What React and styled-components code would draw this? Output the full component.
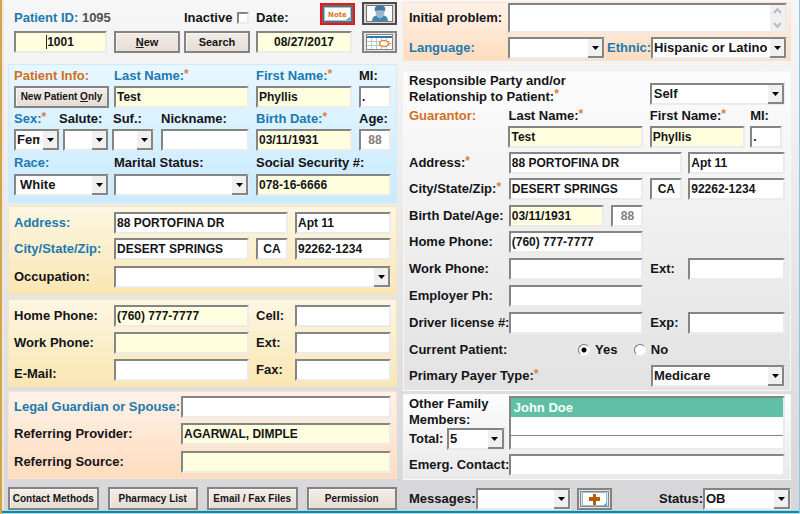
import React from "react";
import styled, { createGlobalStyle, css } from "styled-components";

const GlobalStyle = createGlobalStyle`
  *, *::before, *::after { box-sizing: border-box; }
  body {
    margin: 0;
    background: #dadadc;
    font: bold 13px/14px "Liberation Sans", Arial, sans-serif;
    color: #141418;
  }
  button, input, select, textarea { font: inherit; color: inherit; margin: 0; }
`;

const sunken = css`
  border: 2px solid;
  border-color: #858585 #ebebeb #ebebeb #858585;
`;

const Window = styled.main`
  border-left: 2px solid #cfa54e;
  border-right: 1px solid #8cc8e2;
  background: linear-gradient(#f6f6f6, #eeeeef 30%, #d6d6d8);
`;

const Columns = styled.div`
  display: grid;
  grid-template-columns: minmax(0, 389fr) minmax(0, 388fr);
  column-gap: 6px;
  padding: 2px 8px 0 4px;
  border-left: 2px solid #eee8dc;
`;

const Column = styled.div`
  display: flex;
  flex-direction: column;
`;

const BottomEdge = styled.div`
  height: 4px;
  border-top: 1px solid #a5dbea;
  border-bottom: 1px solid #b5e0ea;
  background: #0f8a9c;
`;

const fills = {
  sky: ["#e8f7ff", "#c8eaff", "#ceecfd"],
  sand: ["#fdf6e2", "#f9e6b2", "#f8e6b8"],
  peach: ["#fff2e8", "#ffdcbe", "#fde3cf"],
  gray: ["#fcfcfc", "#e2e2e3", "#f8f8f8"],
  white: ["#fdfdfd", "#e9e9ea", "#f8f8f8"],
};

const Panel = styled.section`
  margin-top: ${(p) => p.$gap || 0}px;
  padding: ${(p) => p.$pad};
  border: 1px solid ${(p) => fills[p.$fill][2]};
  background: linear-gradient(${(p) => fills[p.$fill][0]}, ${(p) => fills[p.$fill][1]});
`;

const Row = styled.div`
  display: grid;
  grid-template-columns: ${(p) => p.$cols.map((c) => `minmax(0, ${c}fr)`).join(" ")};
  align-items: center;
  min-height: ${(p) => p.$h || 22}px;
  margin-top: ${(p) => p.$top || 0}px;
  padding: ${(p) => p.$pad || 0};
`;

const Cell = styled.div`
  position: relative;
  display: flex;
  align-items: ${(p) => p.$items || "center"};
  justify-content: ${(p) => p.$justify || "flex-start"};
  align-self: ${(p) => p.$align || "center"};
  min-width: 0;
  padding-right: ${(p) => p.$gap || 0}px;
`;

const tones = { blue: "#2079b0", orange: "#d0701c", black: "#141418" };

const Label = styled.label`
  color: ${(p) => tones[p.$tone || "black"]};
  line-height: ${(p) => (p.$twoLine ? 16 : 14)}px;
  white-space: nowrap;
`;

const Heading = styled.h2`
  margin: 0;
  font: inherit;
  color: #d0701c;
`;

const Caption = styled.span`
  line-height: 16px;
  white-space: nowrap;
`;

const PatientId = styled.span`
  color: #55504e;
`;

const Star = styled.span`
  display: inline-block;
  height: 10px;
  font-size: 12px;
  line-height: 10px;
  vertical-align: top;
  color: #d9823f;
`;

const Field = styled.input`
  display: block;
  width: 100%;
  height: 22px;
  padding: 0 1px 1px;
  ${sunken}
  border-radius: 0;
  outline: none;
  background: ${(p) => (p.$required ? "#ffffdf" : "#fff")};
  color: ${(p) => (p.$dim ? "#808080" : "#141418")};
  font-size: 12px;
  text-align: ${(p) => (p.$center ? "center" : "left")};
`;

const Caret = styled.span`
  position: absolute;
  left: calc(50% - 18px);
  top: 4px;
  width: 1px;
  height: 14px;
  background: #222;
`;

const PickBox = styled.div`
  position: relative;
  width: 100%;
  min-width: 0;
`;

const PickControl = styled.select`
  display: block;
  width: 100%;
  height: 22px;
  padding: 0 18px 0 ${(p) => p.$indent}px;
  ${sunken}
  border-radius: 0;
  outline: none;
  appearance: none;
  background: #fff;
`;

const PickArrow = styled.span`
  position: absolute;
  top: 2px;
  right: 1px;
  width: 16px;
  height: 19px;
  display: grid;
  place-items: center;
  border: solid;
  border-width: 0 2px 2px 0;
  border-color: #858585;
  background: #f0f0f0;
  pointer-events: none;
`;

function Pick({ id, label, value = "", indent = 3 }) {
  return (
    <PickBox>
      <PickControl id={id} aria-label={label} defaultValue={value} $indent={indent}>
        <option value={value}>{value}</option>
      </PickControl>
      <PickArrow>
        <svg width="7" height="4" viewBox="0 0 7 4" aria-hidden="true">
          <path d="M0 0h7L3.500 4z" fill="#000" />
        </svg>
      </PickArrow>
    </PickBox>
  );
}

const Button = styled.button`
  width: 100%;
  height: ${(p) => p.$h || 22}px;
  padding: 0;
  border: 2px solid #858286;
  border-radius: 0;
  background: linear-gradient(#f2ede7, #e6ddd3);
  box-shadow: inset 1px 1px #faf8f5;
  font-size: ${(p) => p.$size || 10}px;
  line-height: 12px;
  white-space: nowrap;
`;

const IconButton = styled.button`
  display: block;
  flex: none;
  width: 35px;
  height: ${(p) => p.$h || 22}px;
  padding: 0;
  border: 2px solid ${(p) => p.$edge || "#858286"};
  background: #ece4dc;
  line-height: 0;
  svg { display: block; width: 100%; height: 100%; }
`;

const CheckBox = styled.input`
  appearance: none;
  width: 12px;
  height: 12px;
  ${sunken}
  background: #fff;
`;

const Radio = styled.input`
  appearance: none;
  width: 12px;
  height: 12px;
  border: 1px solid;
  border-color: #777 #f4f4f4 #f4f4f4 #777;
  border-radius: 50%;
  background: #fff;
  &:checked { background: radial-gradient(circle, #000 0 2px, #fff 3px); }
`;

const Choice = styled.label`
  display: flex;
  align-items: center;
  gap: 5px;
`;

const ProblemBox = styled.div`
  position: relative;
  width: 100%;
`;

const Problem = styled.textarea`
  display: block;
  width: 100%;
  height: 30px;
  ${sunken}
  outline: none;
  resize: none;
  background: #fff;
`;

const Scroller = styled.span`
  position: absolute;
  top: 2px;
  right: 2px;
  bottom: 2px;
  width: 15px;
  background: #f0f0f0;
  svg { display: block; width: 15px; height: 26px; }
`;

const FamilyLayout = styled.div`
  display: grid;
  grid-template-columns: minmax(0, 100fr) minmax(0, 277fr);
`;

const FamilyList = styled.ul`
  margin: 0;
  padding: 0;
  height: 54px;
  list-style: none;
  ${sunken}
  background: #fff;
`;

const FamilyItem = styled.li`
  height: 19px;
  padding: 3px 3px 0;
  background: ${(p) => (p.$selected ? "#60bfa4" : "#fff")};
  color: #f4fffb;
  & + & { border-bottom: 1px solid #858585; }
`;

const Footer = styled.div`
  display: grid;
  grid-template-columns: repeat(4, minmax(0, 1fr));
  gap: 9px;
  margin-top: 8px;
`;

const NoteIcon = () => (
  <svg viewBox="0 0 31 18" aria-hidden="true">
    <rect width="31" height="18" fill="#626b72" />
    <rect x="2.500" y="2.500" width="26" height="13" fill="#fff" stroke="#9bc7de" />
    <path d="M28 12v3h-4z" fill="#4d9dca" />
    <text x="15.500" y="12" textAnchor="middle" fontFamily="DejaVu Sans" fontWeight="bold" fontSize="7" fill="#dc7228">Note</text>
  </svg>
);

const PersonIcon = () => (
  <svg viewBox="0 0 31 19" aria-hidden="true">
    <rect width="31" height="19" fill="#ded8d0" />
    <rect x="2.500" y="1.500" width="26" height="16" fill="#fafcfd" stroke="#777" />
    <path d="M8 17c0-4 3-6 8-6s8 2 8 6z" fill="#4386b4" />
    <ellipse cx="16" cy="8" rx="4.500" ry="5" fill="#9cb7cb" />
    <path d="M11 7C10 3 12 1.500 16 1.500S22 3 21 7c-3-1-7-1-10 0z" fill="#3977a5" />
    <path d="M13 12l3 2 3-2" fill="none" stroke="#b9d3e4" />
  </svg>
);

const CalendarIcon = () => (
  <svg viewBox="0 0 31 18" aria-hidden="true">
    <rect x="2.500" y="1.500" width="26" height="15" fill="#fff" stroke="#858585" />
    <path d="M3 4h25" stroke="#2c78ad" strokeWidth="2" />
    <path d="M3 8.500h23M3 12.500h23M7.500 5v11M12.500 5v11M17.500 5v11M22.500 5v11" stroke="#b4c9d8" />
    <ellipse cx="20" cy="10.500" rx="4.500" ry="3" fill="#fff" stroke="#e18a42" strokeWidth="1.500" />
    <path d="M24 10.500h3" stroke="#e18a42" />
  </svg>
);

const AddIcon = () => (
  <svg viewBox="0 0 31 18" aria-hidden="true">
    <rect x="1.500" y="1.500" width="28" height="15" fill="#e8e2dc" stroke="#8a8683" />
    <rect x="3.500" y="2.500" width="24" height="13" fill="#fff" stroke="#8cc4e4" />
    <path d="M28 12v4h-4z" fill="#5aaad6" />
    <path d="M14 4h3v3h4v4h-4v4h-3v-4h-4V7h4z" fill="#b75b08" />
  </svg>
);

const req = <Star>*</Star>;
const IDENTITY = [100, 142, 103, 32];
const ADDRESS = [100, 142, 39, 96];
const PHONE = [100, 142, 39, 96];
const RIGHT = [100, 142, 38, 97];

function Header() {
  return (
    <div>
      <Row $cols={[170, 72, 106, 35]} $h={23} $pad="0 0 0 6px">
        <Cell $align="end">
          <Label htmlFor="pid" $tone="blue">Patient ID: <PatientId>1095</PatientId></Label>
        </Cell>
        <Cell $align="end" $gap={7} $justify="space-between">
          <Label htmlFor="inactive">Inactive</Label>
          <CheckBox id="inactive" type="checkbox" />
        </Cell>
        <Cell $align="end" $items="end" $gap={7} $justify="space-between">
          <Label htmlFor="date">Date:</Label>
          <IconButton aria-label="Note" $edge="#f01414"><NoteIcon /></IconButton>
        </Cell>
        <Cell><IconButton aria-label="Patient photo" $edge="#4c4c4e" $h={23}><PersonIcon /></IconButton></Cell>
      </Row>
      <Row $cols={[100, 70, 72, 106, 35]} $top={6} $pad="0 0 0 6px">
        <Cell $gap={7}><Field id="pid" defaultValue="1001" $required $center /><Caret /></Cell>
        <Cell $gap={4}><Button $size={11}><u>N</u>ew</Button></Cell>
        <Cell $gap={6}><Button $size={11}>Search</Button></Cell>
        <Cell $gap={10}><Field id="date" defaultValue="08/27/2017" $required $center /></Cell>
        <Cell><IconButton aria-label="Calendar"><CalendarIcon /></IconButton></Cell>
      </Row>
    </div>
  );
}

function PatientInfo() {
  return (
    <Panel $fill="sky" $gap={11} $pad="0 5px 6px">
      <Row $cols={IDENTITY} $h={21}>
        <Heading>Patient Info:</Heading>
        <Label htmlFor="last" $tone="blue">Last Name:{req}</Label>
        <Label htmlFor="first" $tone="blue">First Name:{req}</Label>
        <Label htmlFor="mi">MI:</Label>
      </Row>
      <Row $cols={IDENTITY}>
        <Cell $gap={5}><Button>New Patient <u>O</u>nly</Button></Cell>
        <Cell $gap={7}><Field id="last" defaultValue="Test" $required /></Cell>
        <Cell $gap={7}><Field id="first" defaultValue="Phyllis" $required /></Cell>
        <Cell><Field id="mi" defaultValue="." /></Cell>
      </Row>
      <Row $cols={[45, 54, 48, 95, 103, 32]} $h={21}>
        <Label htmlFor="sex" $tone="blue">Sex:{req}</Label>
        <Label htmlFor="salute">Salute:</Label>
        <Label htmlFor="suf">Suf.:</Label>
        <Label htmlFor="nick">Nickname:</Label>
        <Label htmlFor="birth" $tone="blue">Birth Date:{req}</Label>
        <Label htmlFor="age">Age:</Label>
      </Row>
      <Row $cols={[49, 49, 49, 95, 103, 32]}>
        <Cell $gap={3}><Pick id="sex" value="Female" indent={1} /></Cell>
        <Cell $gap={3}><Pick id="salute" /></Cell>
        <Cell $gap={7}><Pick id="suf" /></Cell>
        <Cell $gap={7}><Field id="nick" /></Cell>
        <Cell $gap={7}><Field id="birth" defaultValue="03/11/1931" $required /></Cell>
        <Cell><Field id="age" defaultValue="88" $dim $center /></Cell>
      </Row>
      <Row $cols={[100, 142, 135]} $h={23}>
        <Label htmlFor="race" $tone="blue">Race:</Label>
        <Label htmlFor="marital">Marital Status:</Label>
        <Label htmlFor="ssn">Social Security #:</Label>
      </Row>
      <Row $cols={[100, 142, 135]}>
        <Cell $gap={5}><Pick id="race" value="White" indent={4} /></Cell>
        <Cell $gap={7}><Pick id="marital" /></Cell>
        <Cell><Field id="ssn" defaultValue="078-16-6666" $required /></Cell>
      </Row>
    </Panel>
  );
}

function HomeAddress() {
  return (
    <Panel $fill="sand" $gap={3} $pad="5px 5px 6px">
      <Row $cols={[100, 181, 96]}>
        <Label htmlFor="addr" $tone="blue">Address:</Label>
        <Cell $gap={7}><Field id="addr" defaultValue="88 PORTOFINA DR" /></Cell>
        <Cell><Field aria-label="Unit" defaultValue="Apt 11" /></Cell>
      </Row>
      <Row $cols={ADDRESS} $top={4}>
        <Label htmlFor="city" $tone="blue">City/State/Zip:</Label>
        <Cell $gap={7}><Field id="city" defaultValue="DESERT SPRINGS" /></Cell>
        <Cell $gap={7}><Field aria-label="State" defaultValue="CA" $center /></Cell>
        <Cell><Field aria-label="Zip" defaultValue="92262-1234" /></Cell>
      </Row>
      <Row $cols={[100, 277]} $top={6}>
        <Label htmlFor="occupation">Occupation:</Label>
        <Pick id="occupation" />
      </Row>
    </Panel>
  );
}

function Phones() {
  return (
    <Panel $fill="sand" $gap={4} $pad="5px">
      <Row $cols={PHONE}>
        <Label htmlFor="home">Home Phone:</Label>
        <Cell $gap={7}><Field id="home" defaultValue="(760) 777-7777" $required /></Cell>
        <Label htmlFor="cell">Cell:</Label>
        <Field id="cell" />
      </Row>
      <Row $cols={PHONE} $top={5}>
        <Label htmlFor="work">Work Phone:</Label>
        <Cell $gap={7}><Field id="work" $required /></Cell>
        <Label htmlFor="ext">Ext:</Label>
        <Field id="ext" />
      </Row>
      <Row $cols={PHONE} $top={5}>
        <Cell $align="end"><Label htmlFor="mail">E-Mail:</Label></Cell>
        <Cell $gap={7}><Field id="mail" /></Cell>
        <Label htmlFor="fax">Fax:</Label>
        <Field id="fax" />
      </Row>
    </Panel>
  );
}

function Referral() {
  return (
    <Panel $fill="peach" $gap={4} $pad="4px 5px 5px">
      <Row $cols={[167, 210]}>
        <Label htmlFor="guardian" $tone="blue">Legal Guardian or Spouse:</Label>
        <Field id="guardian" />
      </Row>
      <Row $cols={[167, 210]} $top={5}>
        <Label htmlFor="provider">Referring Provider:</Label>
        <Field id="provider" defaultValue="AGARWAL, DIMPLE" $required />
      </Row>
      <Row $cols={[167, 210]} $top={6}>
        <Label htmlFor="source">Referring Source:</Label>
        <Field id="source" $required />
      </Row>
    </Panel>
  );
}

function Problems() {
  return (
    <Panel $fill="peach" $pad="0 3px 1px 5px">
      <Row $cols={[99, 279]}>
        <Label htmlFor="problem">Initial problem:</Label>
        <ProblemBox>
          <Problem id="problem" />
          <Scroller>
            <svg viewBox="0 0 15 26" fill="none" stroke="#bbb" strokeWidth="2" aria-hidden="true">
              <path d="M4 8l3.500-4L11 8M4 18l3.500 4 3.500-4" />
            </svg>
          </Scroller>
        </ProblemBox>
      </Row>
      <Row $cols={[99, 99, 44, 136]} $top={4}>
        <Label htmlFor="language" $tone="blue">Language:</Label>
        <Cell $gap={2}><Pick id="language" /></Cell>
        <Label htmlFor="ethnic" $tone="blue">Ethnic:</Label>
        <Pick id="ethnic" value="Hispanic or Latino" indent={1} />
      </Row>
    </Panel>
  );
}

function Guarantor() {
  return (
    <Panel $fill="gray" $gap={10} $pad="1px 5px 3px">
      <Row $cols={[242, 136]} $h={32}>
        <Label htmlFor="relation" $twoLine>Responsible Party and/or<br />Relationship to Patient:{req}</Label>
        <Cell $align="end"><Pick id="relation" value="Self" indent={2} /></Cell>
      </Row>
      <Row $cols={[100, 142, 101, 35]} $h={21}>
        <Heading>Guarantor:</Heading>
        <Label htmlFor="glast">Last Name:{req}</Label>
        <Label htmlFor="gfirst">First Name:{req}</Label>
        <Label htmlFor="gmi">MI:</Label>
      </Row>
      <Row $cols={[100, 142, 101, 35]}>
        <span />
        <Cell $gap={7}><Field id="glast" defaultValue="Test" $required /></Cell>
        <Cell $gap={5}><Field id="gfirst" defaultValue="Phyllis" $required /></Cell>
        <Cell $gap={3}><Field id="gmi" defaultValue="." /></Cell>
      </Row>
      <Row $cols={[100, 180, 97]} $top={4}>
        <Label htmlFor="gaddr">Address:{req}</Label>
        <Cell $gap={6}><Field id="gaddr" defaultValue="88 PORTOFINA DR" /></Cell>
        <Field aria-label="Guarantor unit" defaultValue="Apt 11" />
      </Row>
      <Row $cols={RIGHT} $top={4}>
        <Label htmlFor="gcity">City/State/Zip:{req}</Label>
        <Cell $gap={7}><Field id="gcity" defaultValue="DESERT SPRINGS" /></Cell>
        <Cell $gap={6}><Field aria-label="Guarantor state" defaultValue="CA" $center /></Cell>
        <Field aria-label="Guarantor zip" defaultValue="92262-1234" />
      </Row>
      <Row $cols={[100, 103, 32, 142]} $top={5}>
        <Label htmlFor="gbirth">Birth Date/Age:</Label>
        <Cell $gap={7}><Field id="gbirth" defaultValue="03/11/1931" $required /></Cell>
        <Field aria-label="Guarantor age" defaultValue="88" $dim $center />
      </Row>
      <Row $cols={RIGHT} $top={4}>
        <Label htmlFor="ghome">Home Phone:</Label>
        <Cell $gap={7}><Field id="ghome" defaultValue="(760) 777-7777" /></Cell>
      </Row>
      <Row $cols={RIGHT} $top={5}>
        <Label htmlFor="gwork">Work Phone:</Label>
        <Cell $gap={7}><Field id="gwork" /></Cell>
        <Label htmlFor="gext">Ext:</Label>
        <Field id="gext" />
      </Row>
      <Row $cols={RIGHT} $top={5}>
        <Label htmlFor="employer">Employer Ph:</Label>
        <Cell $gap={7}><Field id="employer" /></Cell>
      </Row>
      <Row $cols={RIGHT} $top={5}>
        <Label htmlFor="license">Driver license #:</Label>
        <Cell $gap={7}><Field id="license" /></Cell>
        <Label htmlFor="exp">Exp:</Label>
        <Field id="exp" />
      </Row>
      <Row $cols={[170, 56, 152]} $h={23} $top={4} role="radiogroup" aria-label="Current Patient">
        <Caption>Current Patient:</Caption>
        <Choice><Radio type="radio" name="current" defaultChecked />Yes</Choice>
        <Choice><Radio type="radio" name="current" />No</Choice>
      </Row>
      <Row $cols={[242, 134]} $top={4}>
        <Label htmlFor="payer">Primary Payer Type:{req}</Label>
        <Pick id="payer" value="Medicare" indent={1} />
      </Row>
    </Panel>
  );
}

function Family() {
  return (
    <Panel $fill="white" $gap={3} $pad="1px 5px 3px">
      <FamilyLayout>
        <div>
          <Caption>Other Family<br />Members:</Caption>
          <Row $cols={[38, 62]}>
            <Label htmlFor="total">Total:</Label>
            <Cell $gap={4}><Pick id="total" value="5" indent={1} /></Cell>
          </Row>
        </div>
        <FamilyList aria-label="Other family members">
          <FamilyItem $selected>John Doe</FamilyItem>
          <FamilyItem />
        </FamilyList>
      </FamilyLayout>
      <Row $cols={[100, 277]} $top={4}>
        <Label htmlFor="emergency">Emerg. Contact:</Label>
        <Field id="emergency" />
      </Row>
    </Panel>
  );
}

export default function App() {
  return (
    <>
      <GlobalStyle />
      <Window>
        <Columns>
          <Column>
            <Header />
            <PatientInfo />
            <HomeAddress />
            <Phones />
            <Referral />
            <Footer>
              <Button $h={23}>Contact Methods</Button>
              <Button $h={23}>Pharmacy List</Button>
              <Button $h={23}>Email / Fax Files</Button>
              <Button $h={23}>Permission</Button>
            </Footer>
          </Column>
          <Column>
            <Problems />
            <Guarantor />
            <Family />
            <Row $cols={[67, 101, 82, 44, 88]} $top={8} $pad="0 0 0 6px">
              <Label htmlFor="messages">Messages:</Label>
              <Cell $gap={6}><Pick id="messages" /></Cell>
              <IconButton aria-label="Add message"><AddIcon /></IconButton>
              <Label htmlFor="status">Status:</Label>
              <Pick id="status" value="OB" indent={1} />
            </Row>
          </Column>
        </Columns>
        <BottomEdge />
      </Window>
    </>
  );
}
